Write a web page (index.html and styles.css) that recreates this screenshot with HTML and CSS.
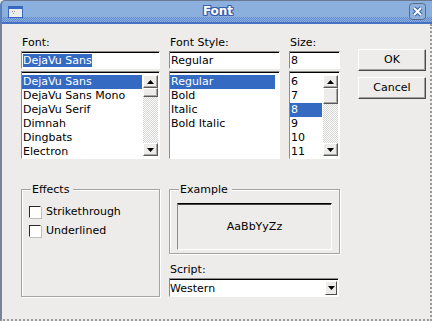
FILE: index.html
```html
<!DOCTYPE html>
<html>
<head>
<meta charset="utf-8">
<link rel="stylesheet" href="styles.css">
</head>
<body>
<div class="window">
  <div class="titlebar">
    <span class="app-icon">
      <svg width="15" height="12" viewBox="0 0 15 12"><rect x="0.5" y="0.5" width="14" height="11" fill="#ececec" stroke="#3a68c0"/><rect x="1" y="1" width="13" height="2" fill="#3a68c0"/><rect x="4" y="5" width="1" height="1" fill="#9a9a9a"/><rect x="6" y="5" width="1" height="1" fill="#9a9a9a"/><rect x="5" y="7" width="1" height="1" fill="#9a9a9a"/></svg>
    </span>
    <span class="title">Font</span>
    <span class="close">
      <svg width="17" height="17" viewBox="0 0 17 17"><rect x="0.5" y="0.5" width="16" height="16" rx="3" fill="#8db0de" stroke="#5b6b86"/><path d="M5 5 L12 12 M12 5 L5 12" stroke="#3561b0" stroke-width="4"/><path d="M5 5 L12 12 M12 5 L5 12" stroke="#fff" stroke-width="2"/></svg>
    </span>
  </div>
  <div class="client">
    <div class="top">
      <div class="col font-col">
        <div class="label">Font:</div>
        <div class="field"><span class="sel">DejaVu Sans</span></div>
        <div class="list">
          <div class="items">
            <div class="item active">DejaVu Sans</div>
            <div class="item">DejaVu Sans Mono</div>
            <div class="item">DejaVu Serif</div>
            <div class="item">Dimnah</div>
            <div class="item">Dingbats</div>
            <div class="item">Electron</div>
          </div>
          <div class="scrollbar">
            <div class="sb-btn"><svg width="7" height="4" viewBox="0 0 7 4"><path d="M3.5 0 L7 4 L0 4Z"/></svg></div>
            <div class="thumb thumb-font"></div>
            <div class="trough"></div>
            <div class="sb-btn"><svg width="7" height="4" viewBox="0 0 7 4"><path d="M0 0 L7 0 L3.5 4Z"/></svg></div>
          </div>
        </div>
      </div>
      <div class="col style-col">
        <div class="label">Font Style:</div>
        <div class="field">Regular</div>
        <div class="list list-style">
          <div class="items">
            <div class="item active">Regular</div>
            <div class="item">Bold</div>
            <div class="item">Italic</div>
            <div class="item">Bold Italic</div>
          </div>
        </div>
      </div>
      <div class="col size-col">
        <div class="label">Size:</div>
        <div class="field">8</div>
        <div class="list">
          <div class="items">
            <div class="item">6</div>
            <div class="item">7</div>
            <div class="item active">8</div>
            <div class="item">9</div>
            <div class="item">10</div>
            <div class="item">11</div>
          </div>
          <div class="scrollbar">
            <div class="sb-btn"><svg width="7" height="4" viewBox="0 0 7 4"><path d="M3.5 0 L7 4 L0 4Z"/></svg></div>
            <div class="thumb thumb-size"></div>
            <div class="trough"></div>
            <div class="sb-btn"><svg width="7" height="4" viewBox="0 0 7 4"><path d="M0 0 L7 0 L3.5 4Z"/></svg></div>
          </div>
        </div>
      </div>
      <div class="buttons">
        <div class="btn">OK</div>
        <div class="btn">Cancel</div>
      </div>
    </div>
    <div class="bottom">
      <div class="group effects">
        <span class="legend">Effects</span>
        <div class="check-row"><span class="checkbox"></span>Strikethrough</div>
        <div class="check-row"><span class="checkbox"></span>Underlined</div>
      </div>
      <div class="right-col">
        <div class="group example">
          <span class="legend">Example</span>
          <div class="sample">AaBbYyZz</div>
        </div>
        <div class="label script-label">Script:</div>
        <div class="combo">
          <span>Western</span>
          <span class="combo-btn"><svg width="7" height="4" viewBox="0 0 7 4"><path d="M0 0 L7 0 L3.5 4Z"/></svg></span>
        </div>
      </div>
    </div>
  </div>
</div>
</body>
</html>
```
FILE: styles.css
```css
* { box-sizing: border-box; }
html, body { margin: 0; padding: 0; }
body {
  width: 432px;
  height: 321px;
  overflow: hidden;
  font: 11px/13px "DejaVu Sans", sans-serif;
  color: #000;
  background: #edecea;
}
.window {
  width: 432px;
  height: 321px;
  display: flex;
  flex-direction: column;
}
.titlebar {
  height: 24px;
  flex: none;
  display: grid;
  grid-template-columns: 1fr auto 1fr;
  align-items: start;
  padding: 0 6px 0 8px;
  border-top: 1px solid #6b7a90;
  border-left: 2px solid #5f7fb8;
  border-top-left-radius: 5px;
  background:
    linear-gradient(#8cb0de, #8cb0de) top / 100% 16px no-repeat,
    linear-gradient(#4672c4, #4672c4) bottom / 100% 2px no-repeat,
    repeating-conic-gradient(#5f89d0 0 25%, #8cb0de 0 50%) 0 0 / 2px 2px;
}
.app-icon { justify-self: start; margin-top: 5px; margin-left: -2px; display: flex; }
.title {
  margin-top: 2px;
  font: bold 12px/16px "DejaVu Sans", sans-serif;
  color: #fff;
  text-shadow: 1px 0 #3461b2, -1px 0 #3461b2, 0 1px #3461b2, 0 -1px #3461b2,
    1px 1px #3461b2, -1px -1px #3461b2, 1px -1px #3461b2, -1px 1px #3461b2;
}
.close { justify-self: end; margin-top: 2px; display: flex; }
.client {
  flex: 1;
  border-left: 2px solid #76839a;
  border-right: 2px dotted #9a9a9a;
  border-bottom: 2px dotted #9a9a9a;
  padding: 12px 0 0 19px;
}
.top { display: flex; }
.font-col { width: 139px; }
.style-col { width: 111px; margin-left: 9px; }
.size-col { width: 51px; margin-left: 9px; }
.label { height: 13px; line-height: 13px; padding-left: 1px; white-space: nowrap; }
.field {
  margin-top: 2px;
  height: 18px;
  border: 1px solid;
  border-color: #8c8c8a #fff #fff #8c8c8a;
  box-shadow: inset 0 1px 0 #000;
  background: #fff;
  padding: 2px 0 0 1px;
  line-height: 13px;
  white-space: nowrap;
  overflow: hidden;
}
.sel { background: #356ac3; color: #fff; }
.list {
  margin-top: 2px;
  height: 88px;
  border: 1px solid;
  border-color: #8c8c8a #fff #fff #8c8c8a;
  box-shadow: inset 0 1px 0 #000;
  background: #fff;
  padding: 3px 1px 2px 0;
  display: flex;
  overflow: hidden;
}
.list-style { padding-right: 4px; }
.items { flex: 1; min-width: 0; }
.item { height: 14px; line-height: 14px; padding-left: 1px; white-space: nowrap; }
.item.active { background: #356ac3; color: #fff; }
.scrollbar {
  width: 15px;
  margin-left: 1px;
  display: flex;
  flex-direction: column;
}
.sb-btn, .thumb {
  background: #edecea;
  border: 1px solid;
  border-color: #fff #5a5a5a #5a5a5a #fff;
  box-shadow: inset -1px -1px 0 #a8a8a6;
}
.sb-btn { height: 13px; display: flex; align-items: center; justify-content: center; flex: none; }
.thumb { flex: none; }
.thumb-font { height: 9px; }
.thumb-size { height: 16px; }
.trough {
  flex: 1;
  background: repeating-conic-gradient(#d4d4d2 0 25%, #fff 0 50%) 0 0 / 2px 2px;
}
.buttons {
  width: 68px;
  margin-left: 18px;
  padding-top: 13px;
  display: flex;
  flex-direction: column;
  gap: 6px;
}
.btn {
  height: 22px;
  background: #edecea;
  border: 1px solid;
  border-color: #fff #4c4c4c #4c4c4c #fff;
  box-shadow: inset -1px -1px 0 #a0a09e;
  text-align: center;
  line-height: 20px;
}
.bottom { display: flex; margin-top: 30px; }
.group {
  position: relative;
  border: 1px solid #a3a3a1;
  box-shadow: inset 1px 1px 0 #fff, 1px 1px 0 #fff;
}
.legend {
  position: absolute;
  top: -7px;
  left: 9px;
  padding: 0 4px 0 1px;
  background: #edecea;
  line-height: 13px;
}
.effects { width: 139px; height: 108px; padding: 12px 0 0 7px; }
.check-row { height: 19px; display: flex; align-items: center; }
.checkbox {
  width: 12px;
  height: 12px;
  background: #fff;
  border: 1px solid;
  border-color: #2a2a2a #fff #fff #2a2a2a;
  box-shadow: 1px 1px 0 #bdbdbb;
  margin-right: 5px;
}
.right-col { width: 171px; margin-left: 9px; }
.example { height: 65px; padding: 13px 7px 0 7px; }
.sample {
  height: 47px;
  border: 1px solid;
  border-color: #000 #fff #fff #8c8c8a;
  box-shadow: inset 0 1px 0 #444;
  display: flex;
  align-items: center;
  justify-content: center;
}
.script-label { margin-top: 9px; }
.combo {
  margin-top: 2px;
  width: 170px;
  height: 19px;
  border: 1px solid;
  border-color: #8c8c8a #fff #fff #8c8c8a;
  box-shadow: inset 0 1px 0 #000;
  background: #fff;
  display: flex;
  align-items: center;
  padding: 1px 1px 0 0;
}
.combo-btn {
  margin-left: auto;
  width: 12px;
  height: 14px;
  background: #edecea;
  border: 1px solid;
  border-color: #fff #4c4c4c #4c4c4c #fff;
  display: flex;
  align-items: center;
  justify-content: center;
}
```
